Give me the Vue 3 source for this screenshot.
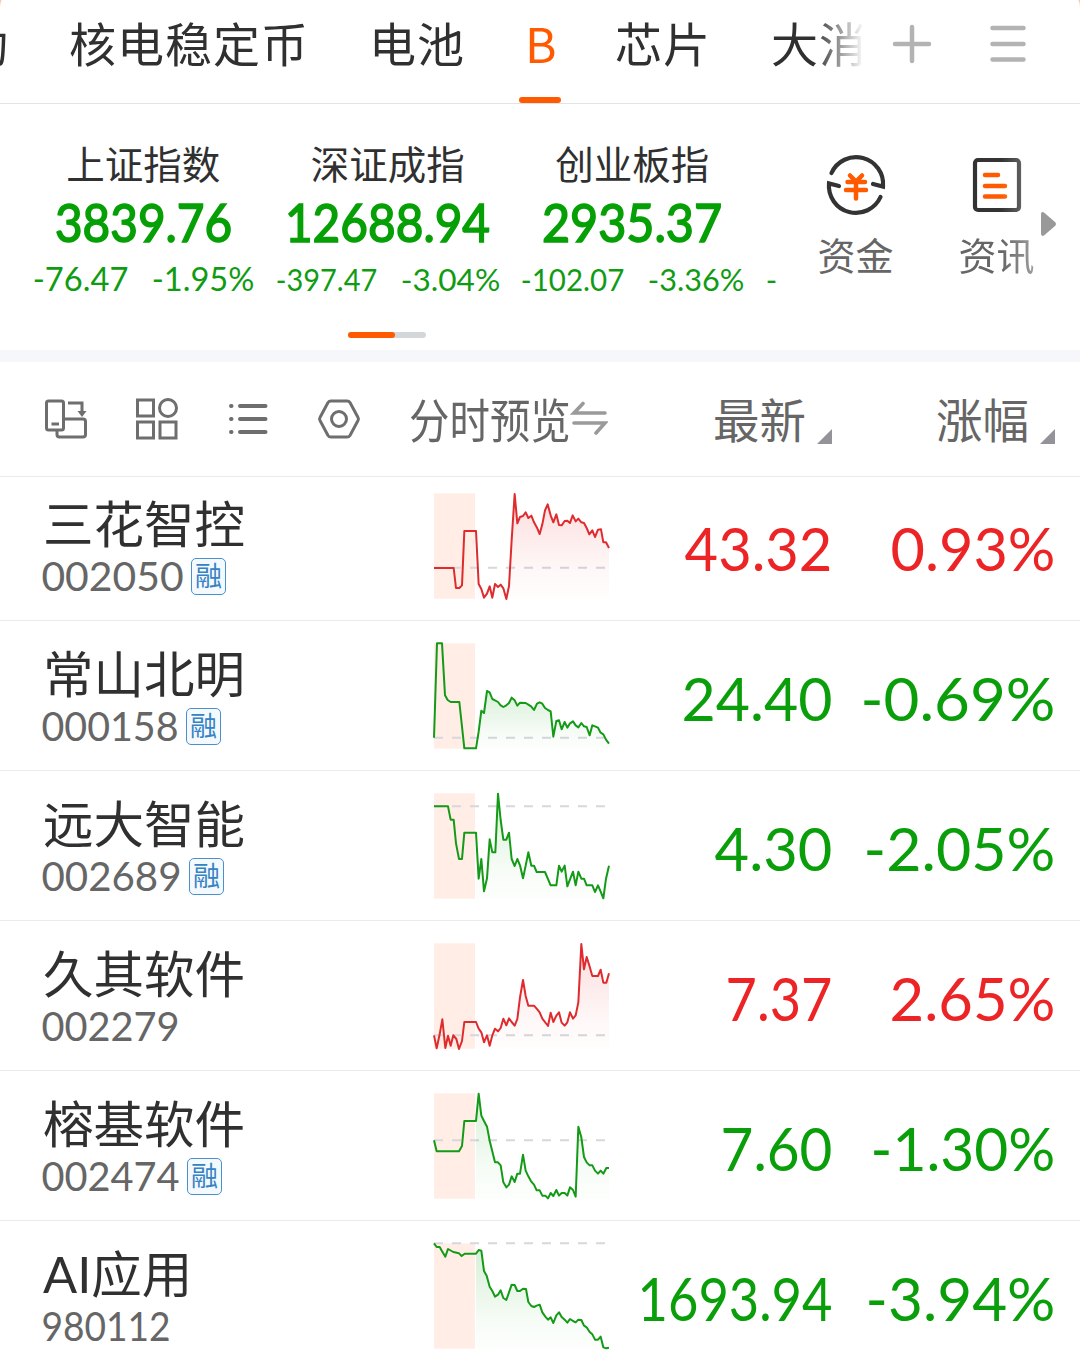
<template>
  <div class="page">
    <header class="tabs">
      <nav class="tab-scroll">
        <span
          v-for="tab in tabs"
          :key="tab"
          class="tab"
          :class="{ active: tab === activeTab }"
          @click="activeTab = tab"
        >{{ tab }}</span>
      </nav>
      <svg class="tab-icon" width="44" height="44" viewBox="0 0 44 44">
        <path d="M5 22H39M22 5V39" />
      </svg>
      <svg class="tab-icon menu" width="44" height="44" viewBox="0 0 44 44">
        <path d="M6.500 6H37.500M6.500 22H37.500M6.500 37.500H37.500" />
      </svg>
    </header>

    <section class="overview">
      <div class="indices">
        <div v-for="item in indices" :key="item.name" class="index">
          <div class="index-name">{{ item.name }}</div>
          <Figure class="index-value" :text="item.value[0]" :width="item.value[1]" :size="52" />
          <div class="index-change">
            <Figure
              v-for="change in item.changes"
              :key="change[0]"
              :text="change[0]"
              :width="change[1]"
              :size="item.size"
            />
          </div>
        </div>
      </div>
      <div class="shortcuts">
        <div class="shortcut">
          <svg width="64" height="64" viewBox="0 0 64 64">
            <g class="dark">
              <path d="M7.500 20A27 27 0 0 1 59 33.500L49 31" />
              <path d="M56.500 44A27 27 0 0 1 5 30.500L15 33" />
            </g>
            <path class="accent" d="M26 22.500L32 28.500L38 22.500M23.500 29H41M22 37H42M32 29V45.500" />
          </svg>
          <span>资金</span>
        </div>
        <div class="shortcut faded">
          <svg width="64" height="64" viewBox="0 0 64 64">
            <rect class="dark" x="10" y="7" width="44" height="50" rx="3" />
            <path class="accent" d="M20 22H33M20 33H40M20 43.500H40" />
          </svg>
          <span>资讯</span>
        </div>
      </div>
      <svg class="more" width="16" height="26" viewBox="0 0 16 26">
        <path d="M0 3.500Q0 0 3 1.500L14 11Q16 13 14 15L3 24.500Q0 26 0 22.500Z" />
      </svg>
      <div class="pager"><i></i></div>
    </section>

    <div class="list-head">
      <div class="tools">
        <svg width="46" height="46" viewBox="0 0 46 46">
          <rect x="3.500" y="5" width="17" height="29" rx="2" />
          <path d="M8.500 28H16M14 35V38.500Q14 41 16.500 41H40Q42.500 41 42.500 38.500V25.500Q42.500 23 40 23H21M25 7H39V18" />
          <path class="solid" d="M34.500 15H43.500L39 21Z" />
        </svg>
        <svg width="46" height="46" viewBox="0 0 46 46">
          <rect x="3.500" y="4" width="16" height="16" />
          <circle cx="34" cy="12" r="8.500" />
          <rect x="3.500" y="26" width="16" height="16" />
          <rect x="26" y="26" width="16" height="16" />
        </svg>
        <svg class="bars" width="46" height="46" viewBox="0 0 46 46">
          <path d="M15 10H40.500M15 23H40.500M15 36H40.500M6 10H6.500M6 23H6.500M6 36H6.500" />
        </svg>
        <svg width="46" height="46" viewBox="0 0 46 46">
          <path d="M15 5H31Q33 5 34 6.500L42 21.500Q43 23 42 24.500L34 39.500Q33 41 31 41H15Q13 41 12 39.500L4 24.500Q3 23 4 21.500L12 6.500Q13 5 15 5Z" />
          <circle cx="23" cy="23" r="7.500" />
        </svg>
      </div>
      <div class="preview">
        <span>分时预览</span>
        <svg width="38" height="36" viewBox="0 0 38 36">
          <path d="M13 2.500L4 12H35M4 22H35L26 32" />
        </svg>
      </div>
      <div class="sort"><span>最新</span><i></i></div>
      <div class="sort"><span>涨幅</span><i></i></div>
    </div>

    <main class="list">
      <div v-for="stock in stocks" :key="stock.code[0]" class="row" :class="stock.trend">
        <div class="title">
          <div class="name">{{ stock.name }}</div>
          <div class="meta">
            <Figure class="code" :text="stock.code[0]" :width="stock.code[1]" :size="40" />
            <span v-if="stock.margin" class="badge">融</span>
          </div>
        </div>
        <svg class="chart" width="178" height="112" viewBox="39 33 534 336">
          <defs>
            <linearGradient :id="'fill' + stock.code[0]" x1="0" y1="0" x2="0" y2="1">
              <stop class="stop" offset="0" stop-opacity="0.16" />
              <stop class="stop" offset="0.750" stop-opacity="0.030" />
              <stop class="stop" offset="1" stop-opacity="0.010" />
            </linearGradient>
          </defs>
          <rect class="preopen" x="42" y="40" width="123" height="316" />
          <path class="base" :d="`M42 ${stock.base}H567`" />
          <path :d="areaPath(stock.points)" :fill="`url(#fill${stock.code[0]})`" />
          <polyline class="line" :points="stock.points" />
        </svg>
        <div class="quote">
          <Figure :text="stock.price[0]" :width="stock.price[1]" :size="60" />
        </div>
        <div class="quote">
          <Figure :text="stock.rate[0]" :width="stock.rate[1]" :size="60" />
        </div>
      </div>
    </main>
  </div>
</template>

<script setup>
import { h, ref } from 'vue'

const CAP_HEIGHT = 0.72
const SIDE_BEARING = 0.04

// Number fitted to a given width, its box is exactly as tall as the digits
const Figure = ({ text, width, size }) => {
  const height = size * CAP_HEIGHT
  const bearing = size * SIDE_BEARING
  return h('svg', { class: 'figure', width, height }, [
    h('text', {
      x: -bearing,
      y: height,
      fill: 'currentColor',
      'font-size': size,
      textLength: width + bearing * 2,
      lengthAdjust: 'spacingAndGlyphs'
    }, text)
  ])
}
Figure.props = ['text', 'width', 'size']

const tabs = ['动', '核电稳定币', '电池', 'B', '芯片', '大消费']
const activeTab = ref('B')

// figures are stored as [text, width]
const indices = [
  { name: '上证指数', value: ['3839.76', 173], size: 33.5, changes: [['-76.47', 93], ['-1.95%', 100]] },
  { name: '深证成指', value: ['12688.94', 201], size: 30.7, changes: [['-397.47', 99], ['-3.04%', 97]] },
  { name: '创业板指', value: ['2935.37', 176], size: 30.7, changes: [['-102.07', 101], ['-3.36%', 94]] },
  { name: '', value: ['', 0], size: 30.7, changes: [['-', 9]] }
]

const OPEN_X = 168 // the call auction ends here
const BOTTOM_Y = 356

const stocks = [
  {
    name: '三花智控', code: ['002050', 139], margin: true, trend: 'up', price: ['43.32', 143], rate: ['0.93%', 160], base: 263,
    points: '42,264 101,264 108,324 118,324 126,316 133,153 168,153 176,312 184,327 192,353 201,341 209,319 217,353 225,312 234,321 242,314 250,325 259,357 267,318 275,180 284,42 292,130 300,111 309,108 317,97 325,114 334,107 342,127 351,143 359,162 367,133 375,91 383,73 392,106 400,127 409,103 417,135 425,136 434,123 442,122 450,129 458,106 467,124 475,116 484,127 492,129 500,144 508,163 517,151 525,171 534,149 543,148 550,187 558,187 567,204'
  },
  {
    name: '常山北明', code: ['000158', 134], margin: true, trend: 'down', price: ['24.40', 146], rate: ['-0.69%', 190], base: 323,
    points: '42,323 51,40 66,40 75,196 83,210 92,216 118,216 133,355 168,355 176,305 184,242 192,249 201,183 209,187 217,207 225,211 234,216 242,226 250,231 259,226 267,219 275,203 284,211 292,227 300,218 317,219 325,224 334,230 342,240 351,221 359,217 367,221 375,234 384,240 392,244 400,320 409,273 417,271 425,298 434,276 442,293 450,280 459,274 467,286 475,292 484,279 492,289 500,291 509,316 517,286 525,289 534,293 542,308 550,313 558,329 567,341'
  },
  {
    name: '远大智能', code: ['002689', 137], margin: true, trend: 'down', price: ['4.30', 113], rate: ['-2.05%', 187], base: 79,
    points: '42,79 84,79 92,119 101,119 108,190 117,237 126,237 133,158 168,158 176,296 184,237 192,334 201,295 209,178 217,217 226,217 234,41 242,120 250,179 259,179 267,158 275,237 284,258 292,237 300,256 309,295 317,257 325,217 334,257 342,257 350,276 375,276 392,316 409,316 417,257 425,275 434,257 442,319 450,298 459,275 467,316 475,275 484,296 492,296 500,316 517,316 525,336 534,316 542,335 550,355 558,296 567,257'
  },
  {
    name: '久其软件', code: ['002279', 135], margin: false, trend: 'up', price: ['7.37', 102], rate: ['2.65%', 161], base: 316,
    points: '42,316 50,355 59,313 67,268 76,354 84,317 92,347 100,316 109,327 117,357 126,333 133,276 168,276 176,296 184,307 192,337 201,316 209,347 217,316 225,296 234,304 242,294 250,266 259,286 267,265 275,276 284,287 292,267 300,202 309,150 317,198 325,227 342,227 350,236 359,247 367,266 384,288 392,248 400,276 409,257 417,247 425,278 434,287 442,277 450,247 459,266 467,256 475,217 484,42 492,118 500,81 509,110 517,138 534,138 542,119 550,158 559,158 567,130'
  },
  {
    name: '榕基软件', code: ['002474', 135], margin: true, trend: 'down', price: ['7.60', 107], rate: ['-1.30%', 180], base: 181,
    points: '42,181 50,214 117,214 126,198 133,123 168,123 176,41 184,107 192,123 201,140 209,182 225,247 234,247 242,256 250,307 259,322 267,314 275,289 284,306 292,281 300,281 309,224 317,272 325,289 334,305 342,314 350,331 359,331 367,347 376,347 384,355 392,339 400,348 409,330 417,347 425,339 434,339 442,347 450,322 459,330 467,350 475,140 484,172 492,231 500,247 509,256 517,256 525,272 534,281 542,272 550,281 559,264 567,264'
  },
  {
    name: 'AI应用', code: ['980112', 126], margin: false, trend: 'down', price: ['1693.94', 190], rate: ['-3.94%', 185], base: 40,
    points: '42,40 50,51 59,51 67,65 76,80 84,57 100,66 117,70 125,78 134,71 168,71 176,60 184,62 192,123 200,137 209,170 217,183 225,200 234,194 242,181 250,204 259,210 267,187 275,164 284,165 292,183 300,183 309,176 318,177 325,216 334,228 342,231 350,227 359,224 367,247 376,260 384,269 392,262 400,279 409,256 417,247 425,261 434,269 442,278 450,267 459,273 467,277 475,269 484,270 492,287 500,292 509,306 517,313 525,329 534,329 542,320 550,352 559,355 567,353'
  }
]

const areaPath = (points) => {
  const visible = points.split(' ').filter(p => Number(p.split(',')[0]) >= OPEN_X)
  return `M${OPEN_X},${BOTTOM_Y}L${visible.join('L')}L567,${BOTTOM_Y}Z`
}
</script>

<style>
body {
  background: #f6c9b0;
}
</style>

<style scoped>
.page {
  width: 1080px;
  height: 1360px;
  overflow: hidden;
  background: #fff;
  border-radius: 2px 2px 0 0 / 9px 9px 0 0;
  color: #303030;
  font-family: Lato, "Noto Sans CJK SC", sans-serif;
}

.figure {
  flex: none;
  overflow: visible;
}

/* top tabs */
.tabs {
  display: flex;
  align-items: center;
  height: 103px;
  border-bottom: 1px solid #e4e4e4;
}

.tab-scroll {
  display: flex;
  gap: 60px;
  width: 901px;
  height: 103px;
  margin-left: -39px;
  overflow: hidden;
  -webkit-mask-image: linear-gradient(90deg, #000 853px, transparent 903px);
  mask-image: linear-gradient(90deg, #000 853px, transparent 903px);
}

.tab {
  position: relative;
  flex: none;
  font-size: 47px;
  line-height: 89px;
  letter-spacing: 1px;
  white-space: nowrap;
}

.tab.active {
  width: 30px;
  text-align: center;
  color: #ff5a00;
  font-family: "Noto Sans CJK SC", sans-serif;
  font-size: 48px;
  line-height: 85px;
}

.tab.active::after {
  content: "";
  position: absolute;
  left: -6px;
  bottom: 0;
  width: 42px;
  height: 6px;
  border-radius: 3px;
  background: #ff5a00;
}

.tab-icon {
  margin: -16px 0 0 28px;
  fill: none;
  stroke: #b3b3b3;
  stroke-width: 4.5;
  stroke-linecap: round;
}

.tab-icon.menu {
  margin-left: 52px;
}

/* market overview */
.overview {
  position: relative;
  display: flex;
  height: 246px;
  border-bottom: 12px solid #f6f7fa;
}

.indices {
  display: flex;
  width: 756px;
  padding-left: 21px;
  overflow: hidden;
}

.index {
  display: flex;
  flex: none;
  flex-direction: column;
  align-items: center;
  width: 244.500px;
  padding-top: 38px;
}

.index:last-child {
  align-items: flex-start;
  padding-left: 12px;
}

.index-name {
  height: 44px;
  font-size: 38.500px;
  line-height: 44px;
}

.index-value {
  margin-top: 19px;
  color: #06a006;
  stroke: #06a006;
  stroke-width: 1.600px;
}

.index-change {
  display: flex;
  align-items: flex-end;
  gap: 26px;
  height: 24px;
  margin-top: 25px;
  color: #109c12;
}

.shortcuts {
  display: flex;
  padding-top: 49px;
  margin-left: 8px;
}

.shortcut {
  display: flex;
  flex-direction: column;
  align-items: center;
  width: 141px;
  color: #666;
  font-size: 38px;
  line-height: 76px;
}

.shortcut.faded {
  -webkit-mask-image: linear-gradient(90deg, #000 75px, rgba(0, 0, 0, 0.6) 112px);
  mask-image: linear-gradient(90deg, #000 75px, rgba(0, 0, 0, 0.6) 112px);
}

.shortcut svg {
  fill: none;
  stroke-linecap: round;
}

.dark {
  stroke: #333;
  stroke-width: 4.200;
}

.accent {
  stroke: #ff5a00;
  stroke-width: 4.500;
}

.more {
  position: absolute;
  top: 107px;
  right: 23px;
  fill: #999;
}

.pager {
  position: absolute;
  top: 228px;
  left: 348px;
  width: 78px;
  height: 6px;
  border-radius: 3px;
  background: #d3d7da;
}

.pager i {
  display: block;
  width: 47px;
  height: 6px;
  border-radius: 3px;
  background: #ff5a00;
}

/* list header */
.list-head {
  display: flex;
  align-items: center;
  height: 114px;
  border-bottom: 1px solid #ebebeb;
  color: #666;
  font-size: 46.500px;
}

.tools {
  display: flex;
  gap: 45px;
  width: 366px;
  padding-left: 43px;
}

.tools svg {
  fill: none;
  stroke: #6e6e6e;
  stroke-width: 3;
}

.tools .bars {
  stroke-width: 4;
  stroke-linecap: round;
}

.tools .solid {
  fill: #6e6e6e;
  stroke: none;
}

.preview {
  display: flex;
  align-items: center;
  width: 201px;
}

.preview span {
  width: 161px;
  padding-bottom: 4px;
  white-space: nowrap;
  transform: scaleX(0.870);
  transform-origin: left;
}

.preview svg {
  fill: none;
  stroke: #9a9a9a;
  stroke-width: 3.600;
  stroke-linecap: round;
}

.sort {
  display: flex;
  align-items: center;
  justify-content: flex-end;
  width: 222px;
}

.sort + .sort {
  width: 223px;
}

.sort span {
  padding-bottom: 4px;
}

.sort i {
  width: 15px;
  height: 15px;
  margin: 35px 0 0 11px;
  background: #939399;
  clip-path: polygon(100% 0, 100% 100%, 0 100%);
}

/* stock rows */
.list {
  overflow: hidden;
}

.row {
  display: flex;
  box-sizing: border-box;
  height: 150px;
  border-bottom: 1px solid #ebebeb;
}

.row:first-child {
  margin-top: -6px;
}

.title {
  width: 390px;
  padding: 23px 0 0 43px;
}

.name {
  height: 60px;
  font-size: 50.500px;
  line-height: 60px;
}

.meta {
  display: flex;
  align-items: center;
  height: 45px;
}

.code {
  color: #666;
}

.badge {
  box-sizing: border-box;
  width: 35px;
  height: 37px;
  margin-left: 9px;
  border: 1.500px solid #4a90cc;
  border-radius: 5px;
  background: #f4f9fd;
  color: #3582c4;
  font-size: 27px;
  line-height: 33px;
  text-align: center;
}

.chart {
  flex: none;
  margin-top: 20px;
  overflow: visible;
}

.preopen {
  fill: #ffede6;
}

.base {
  fill: none;
  stroke: #d6d8dd;
  stroke-width: 6;
  stroke-dasharray: 27 27;
}

.line {
  fill: none;
  stroke-width: 6;
  stroke-linejoin: round;
}

.quote {
  display: flex;
  justify-content: flex-end;
  width: 219px;
  padding-top: 57px;
}

.quote + .quote {
  width: 223px;
}

.up .quote {
  color: #ed2426;
}

.down .quote {
  color: #0a9f0a;
}

.up .line {
  stroke: #df2b2d;
}

.down .line {
  stroke: #149a17;
}

.up .stop {
  stop-color: #ed2426;
}

.down .stop {
  stop-color: #0a9f0a;
}
</style>
